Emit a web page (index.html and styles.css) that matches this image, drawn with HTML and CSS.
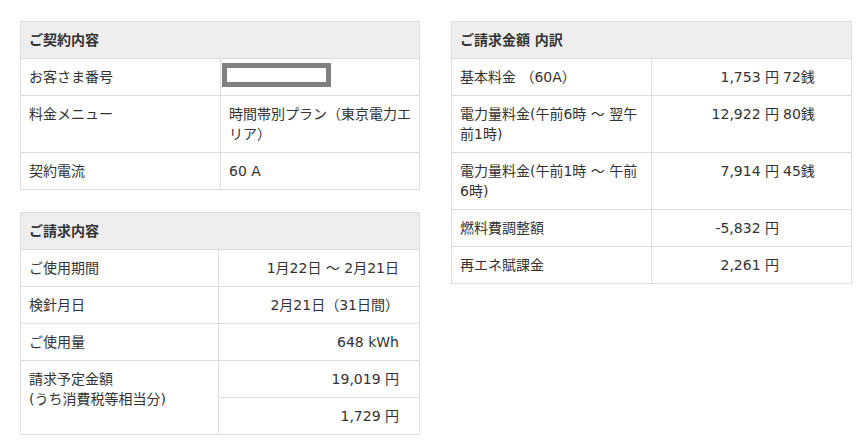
FILE: index.html
```html
<!DOCTYPE html>
<html lang="ja">
<head>
<meta charset="utf-8">
<title>ご請求内容</title>
<link rel="stylesheet" href="styles.css">
</head>
<body>
<div class="page">
  <div class="col col-left">
    <table class="tbl">
      <tr><th colspan="2" class="head">ご契約内容</th></tr>
      <tr><td class="label w200">お客さま番号</td><td class="masked"><span class="mask"></span></td></tr>
      <tr><td class="label">料金メニュー</td><td class="nowrap">時間帯別プラン（東京電力エ<br>リア）</td></tr>
      <tr><td class="label">契約電流</td><td>60 A</td></tr>
    </table>
    <table class="tbl">
      <tr><th colspan="2" class="head">ご請求内容</th></tr>
      <tr><td class="label w198">ご使用期間</td><td class="num">1月22日 ～ 2月21日</td></tr>
      <tr><td class="label">検針月日</td><td class="num">2月21日（31日間）</td></tr>
      <tr><td class="label">ご使用量</td><td class="num">648 kWh</td></tr>
      <tr><td class="label" rowspan="2">請求予定金額<br>(うち消費税等相当分)</td><td class="num">19,019 円</td></tr>
      <tr><td class="num">1,729 円</td></tr>
    </table>
  </div>
  <div class="col col-right">
    <table class="tbl">
      <tr><th colspan="2" class="head">ご請求金額 内訳</th></tr>
      <tr><td class="label w200">基本料金 （60A）</td><td class="amount"><span class="yen">1,753 円</span><span class="sen">72銭</span></td></tr>
      <tr><td class="label nowrap">電力量料金(午前6時 ～ 翌午<br>前1時)</td><td class="amount"><span class="yen">12,922 円</span><span class="sen">80銭</span></td></tr>
      <tr><td class="label nowrap">電力量料金(午前1時 ～ 午前<br>6時)</td><td class="amount"><span class="yen">7,914 円</span><span class="sen">45銭</span></td></tr>
      <tr><td class="label">燃料費調整額</td><td class="amount"><span class="yen">-5,832 円</span><span class="sen"></span></td></tr>
      <tr><td class="label">再エネ賦課金</td><td class="amount"><span class="yen">2,261 円</span><span class="sen"></span></td></tr>
    </table>
  </div>
</div>
</body>
</html>
```

FILE: styles.css
```css
html, body {
  margin: 0;
  padding: 0;
  background: #fff;
}

body {
  font-family: "DejaVu Sans", "Noto Sans CJK JP", sans-serif;
  font-size: 14px;
  color: #333;
}

.page {
  display: flex;
  align-items: flex-start;
  gap: 31px;
  padding: 21px 0 0 20px;
}

.col {
  display: flex;
  flex-direction: column;
  gap: 22px;
}

.col-left {
  width: 400px;
}

.col-right {
  width: 401px;
}

.tbl {
  width: 100%;
  border-collapse: collapse;
}

.tbl th,
.tbl td {
  border: 1px solid #ddd;
  padding: 8px;
  line-height: 20px;
  text-align: left;
  vertical-align: top;
  font-weight: normal;
}

.tbl th.head {
  background: #eee;
  font-weight: bold;
}

.tbl td.nowrap {
  white-space: nowrap;
}

.w200 {
  width: 183px;
}

.w198 {
  width: 181px;
}

.mask {
  display: block;
  box-sizing: border-box;
  width: 109px;
  height: 24px;
  margin: -4px 0 -4px -7px;
  border: 5px solid #808080;
  background: #fff;
}

.tbl td.num {
  text-align: right;
  padding-right: 20px;
}

.tbl td.amount {
  text-align: right;
  padding-right: 32px;
  white-space: nowrap;
}

.sen {
  display: inline-block;
  width: 36px;
  margin-left: 4px;
  text-align: left;
}
```
